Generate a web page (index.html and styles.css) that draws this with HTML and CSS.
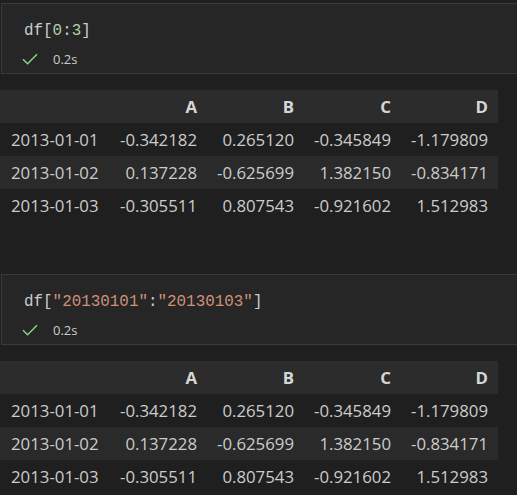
FILE: index.html
```html
<!DOCTYPE html>
<html>
<head>
<meta charset="utf-8">
<link rel="stylesheet" href="styles.css">
</head>
<body>
<div class="notebook">
  <section class="cell">
    <div class="editor">
      <div class="code"><span class="tok">df[</span><span class="num">0</span><span class="tok">:</span><span class="num">3</span><span class="tok">]</span></div>
      <div class="status">
        <svg class="check" width="16" height="12" viewBox="0 0 16 12"><path d="M1 6.2 L5.6 10.8 L15 1.2" fill="none" stroke="#89d185" stroke-width="1.5"/></svg>
        <span class="time">0.2s</span>
      </div>
    </div>
    <div class="output">
      <table class="df">
        <colgroup><col class="c-idx"><col class="c-val"><col class="c-val"><col class="c-val"><col class="c-val"></colgroup>
        <thead><tr><th></th><th>A</th><th>B</th><th>C</th><th>D</th></tr></thead>
        <tbody>
          <tr><td class="idx">2013-01-01</td><td>-0.342182</td><td>0.265120</td><td>-0.345849</td><td>-1.179809</td></tr>
          <tr><td class="idx">2013-01-02</td><td>0.137228</td><td>-0.625699</td><td>1.382150</td><td>-0.834171</td></tr>
          <tr><td class="idx">2013-01-03</td><td>-0.305511</td><td>0.807543</td><td>-0.921602</td><td>1.512983</td></tr>
        </tbody>
      </table>
    </div>
  </section>
  <section class="cell">
    <div class="editor">
      <div class="code"><span class="tok">df[</span><span class="str">"20130101"</span><span class="tok">:</span><span class="str">"20130103"</span><span class="tok">]</span></div>
      <div class="status">
        <svg class="check" width="16" height="12" viewBox="0 0 16 12"><path d="M1 6.2 L5.6 10.8 L15 1.2" fill="none" stroke="#89d185" stroke-width="1.5"/></svg>
        <span class="time">0.2s</span>
      </div>
    </div>
    <div class="output">
      <table class="df">
        <colgroup><col class="c-idx"><col class="c-val"><col class="c-val"><col class="c-val"><col class="c-val"></colgroup>
        <thead><tr><th></th><th>A</th><th>B</th><th>C</th><th>D</th></tr></thead>
        <tbody>
          <tr><td class="idx">2013-01-01</td><td>-0.342182</td><td>0.265120</td><td>-0.345849</td><td>-1.179809</td></tr>
          <tr><td class="idx">2013-01-02</td><td>0.137228</td><td>-0.625699</td><td>1.382150</td><td>-0.834171</td></tr>
          <tr><td class="idx">2013-01-03</td><td>-0.305511</td><td>0.807543</td><td>-0.921602</td><td>1.512983</td></tr>
        </tbody>
      </table>
    </div>
  </section>
</div>
</body>
</html>
```
FILE: styles.css
```css
html, body {
  margin: 0;
  padding: 0;
  background: #1f1f1f;
  overflow: hidden;
}
.notebook {
  display: flex;
  flex-direction: column;
  gap: 52px;
  padding-top: 3px;
  width: 540px;
}
.cell {
  display: flex;
  flex-direction: column;
  gap: 16px;
}
.editor {
  margin-left: 1px;
  height: 69px;
  background: #262626;
  border: 1px solid #3a3a3a;
  box-sizing: content-box;
  display: flex;
  flex-direction: column;
  padding-left: 22px;
}
.code {
  margin-top: 16px;
  height: 22px;
  line-height: 22px;
  font-family: "Liberation Mono", "DejaVu Sans Mono", monospace;
  font-size: 15.9px;
  color: #cccccc;
  white-space: pre;
}
.tok { color: #cccccc; }
.num { color: #b5cea8; }
.str { color: #ce9178; }
.status {
  margin-top: 8px;
  display: flex;
  align-items: center;
  gap: 15px;
  height: 18px;
}
.check { display: block; margin-left: -2px; }
.time {
  font-family: "Open Sans", "Noto Sans", sans-serif;
  font-size: 13px;
  color: #cccccc;
}
.output {
  display: block;
}
.df {
  border-collapse: collapse;
  table-layout: fixed;
  width: 498px;
  font-family: "Open Sans", "Noto Sans", sans-serif;
  font-size: 16.8px;
  color: #cccccc;
}
.c-idx { width: 110px; }
.c-val { width: 97px; }
.df th, .df td {
  height: 33px;
  padding: 0 10px 0 0;
  text-align: right;
  white-space: nowrap;
  box-sizing: border-box;
}
.df th {
  font-weight: 700;
  color: #d6d6d6;
  background: #2c2c2c;
}
.df td.idx {
  text-align: left;
  padding: 0 0 0 11px;
}
.df tbody tr:nth-child(2) td {
  background: #2a2a2a;
}
```
